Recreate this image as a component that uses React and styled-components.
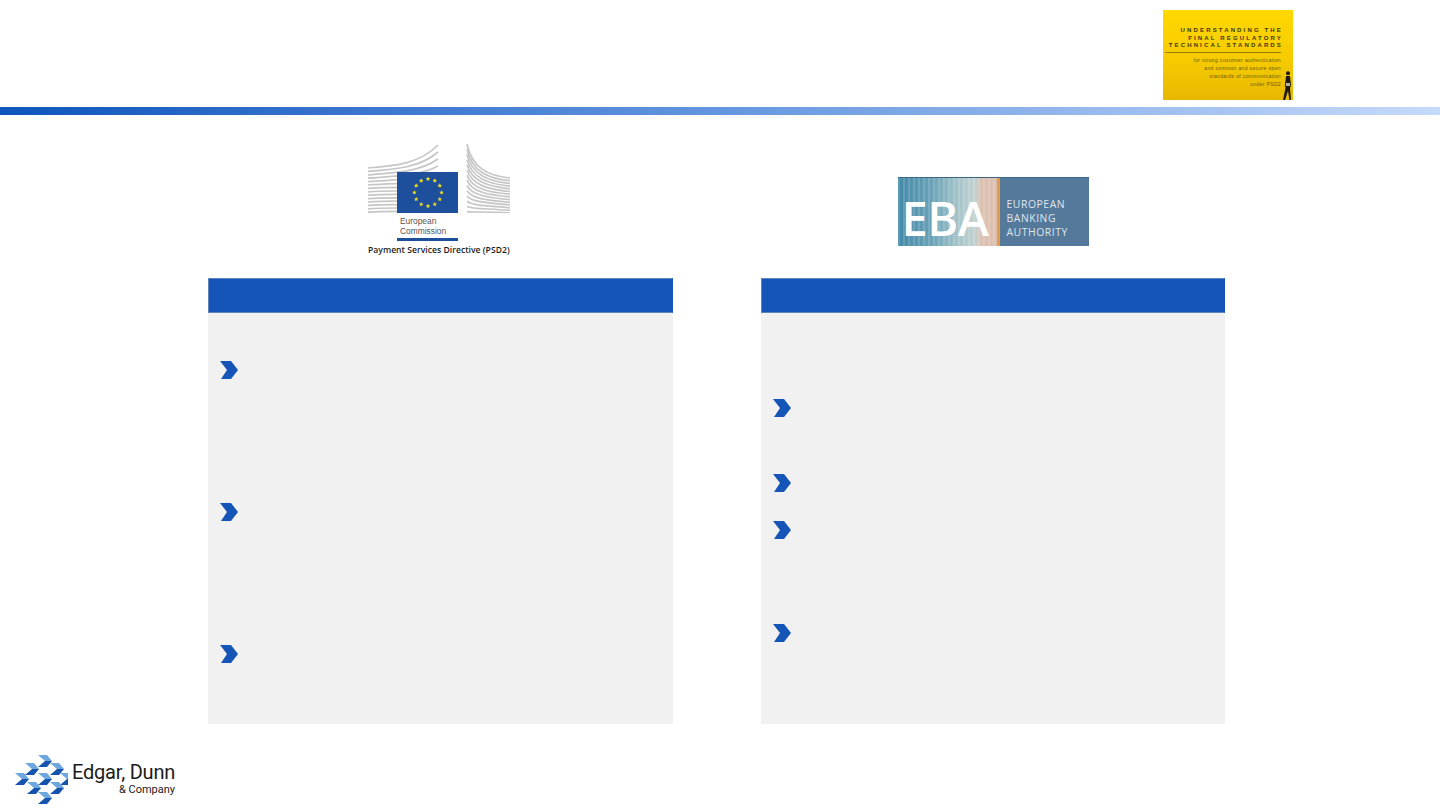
import React from 'react';
import styled, { createGlobalStyle } from 'styled-components';

const GlobalStyle = createGlobalStyle`
  html, body { margin: 0; padding: 0; background: #fff; }
  body { font-family: "Open Sans", "Liberation Sans", sans-serif; overflow: hidden; }
`;

const Page = styled.div`
  width: 1440px;
  height: 810px;
  display: flex;
  flex-direction: column;
  background: #fff;
`;

const TopBand = styled.header`
  height: 107px;
  box-sizing: border-box;
  padding: 10px 147px 0 0;
  display: flex;
  justify-content: flex-end;
  align-items: flex-start;
`;

const GradientBar = styled.div`
  height: 8px;
  background: linear-gradient(90deg, #0f55bc 0%, #5a8fdc 45%, #c6dafa 100%);
`;

const Columns = styled.main`
  display: grid;
  grid-template-columns: 465px 464px;
  column-gap: 88px;
  padding-left: 208px;
`;

const Column = styled.section`
  display: flex;
  flex-direction: column;
`;

const LogoSlot = styled.div`
  height: 163px;
  box-sizing: border-box;
  padding-top: ${p => p.$top}px;
  display: flex;
  justify-content: center;
  align-items: flex-start;
`;

const Panel = styled.div`
  height: 446px;
  display: flex;
  flex-direction: column;
  background: #f1f1f1;
`;

const PanelHead = styled.div`
  height: 35px;
  box-sizing: border-box;
  background: #1555b7;
  border: 1px solid #5f83bd;
  border-right-color: #1555b7;
`;

const BulletList = styled.ul`
  list-style: none;
  margin: 0;
  padding: ${p => p.$top}px 0 0 12px;
`;

const Bullet = styled.li`
  height: ${p => p.$height}px;
`;

const ChevronSvg = styled.svg`
  display: block;
  width: 18px;
  height: 18px;
`;

const Chevron = () => (
  <ChevronSvg viewBox="0 0 18 18">
    <polygon points="0,0 11,0 18,9 11,18 1,18 7,9" fill="#1555b7" />
  </ChevronSvg>
);

/* yellow report cover */
const Cover = styled.div`
  position: relative;
  width: 130px;
  height: 90px;
  box-sizing: border-box;
  padding: 17px 12px 0 2px;
  background: linear-gradient(180deg, #ffd800 0%, #f6cb00 55%, #e6b800 100%);
  text-align: right;
  color: #3d3510;
  font-family: "Liberation Sans", Arial, sans-serif;
`;

const CoverTitle = styled.div`
  font-size: 6px;
  line-height: 7.5px;
  font-weight: 700;
  letter-spacing: 2.15px;
  white-space: nowrap;
  margin-right: -2px;
`;

const CoverRule = styled.div`
  height: 1px;
  margin: 2px 0 3px;
  background: #8f7d10;
`;

const CoverLine = styled.div`
  font-size: 5px;
  line-height: 8.3px;
  letter-spacing: 0.35px;
  white-space: nowrap;
  color: #6b5c10;
`;

const Walker = styled.svg`
  position: absolute;
  right: 1px;
  bottom: 0;
  width: 9px;
  height: 29px;
`;

/* European Commission */
const EcLogo = styled.div`
  width: 148px;
  display: flex;
  flex-direction: column;
  margin-left: 3px;
`;

const EcSvg = styled.svg`
  display: block;
  width: 142px;
  height: 69px;
`;

const EcName = styled.div`
  margin: 3px 0 0 32px;
  font-family: "Liberation Sans", Arial, sans-serif;
  font-size: 8.4px;
  line-height: 10px;
  color: #555;
`;

const EcRule = styled.div`
  width: 61px;
  height: 3px;
  margin: 2px 0 0 29px;
  background: #1d4f9c;
`;

const EcCaption = styled.div`
  margin-top: 3px;
  font-size: 8.6px;
  line-height: 12px;
  font-weight: 600;
  letter-spacing: 0.02px;
  white-space: nowrap;
  color: #1c1c1c;
`;

const buildingLeft = Array.from({ length: 14 }, (_, i) => {
  const y = 24 + i * 3.4;
  const rise = Math.max(0, 23 - i * 3.6);
  return `M0,${y} C28,${y - 2} 52,${y - rise * 0.2} 70,${y - rise}`;
});

const buildingRight = Array.from({ length: 14 }, (_, i) => {
  const y = i * 5.2;
  const end = 34 + i * 2.7;
  return `M99,${y} C104,${y + (end - y) * 0.7} 120,${end - 2} 142,${end}`;
});

const starPoints = (cx, cy, r) =>
  Array.from({ length: 10 }, (_, i) => {
    const a = -Math.PI / 2 + (i * Math.PI) / 5;
    const d = i % 2 ? r * 0.42 : r;
    return `${(cx + d * Math.cos(a)).toFixed(2)},${(cy + d * Math.sin(a)).toFixed(2)}`;
  }).join(' ');

const euStars = Array.from({ length: 12 }, (_, i) => {
  const a = (i * Math.PI) / 6;
  return starPoints(60 + 13.6 * Math.cos(a), 48.5 + 13.6 * Math.sin(a), 2.5);
});

/* EBA */
const EbaLogo = styled.div`
  width: 191px;
  height: 69px;
  display: flex;
  margin-top: 1px;
  border-top: 1px solid #3c6685;
  box-sizing: border-box;
`;

const EbaMark = styled.div`
  width: 102px;
  box-sizing: border-box;
  padding-left: 4px;
  display: flex;
  align-items: flex-end;
  border-right: 3px solid #e79a45;
  color: #fff;
  font-size: 47px;
  line-height: 56px;
  font-weight: 600;
  letter-spacing: -0.5px;
  white-space: nowrap;
  background:
    repeating-linear-gradient(90deg, rgba(255,255,255,0.14) 0 2px, transparent 2px 5px),
    linear-gradient(90deg, #4389a8 0%, #6ba3b8 35%, #a9c6cb 62%, #c2d2d0 78%, #dcc1b2 84%, #dcbfae 100%);
`;

const EbaName = styled.div`
  flex: 1;
  box-sizing: border-box;
  padding: 19px 0 0 7px;
  background: #55799a;
  color: #dfe7ee;
  font-size: 10.4px;
  line-height: 14px;
  letter-spacing: 0.55px;
`;

/* Edgar, Dunn & Company */
const FooterBrand = styled.footer`
  margin: 31px 0 0 8px;
  display: flex;
  align-items: flex-start;
`;

const BrandMark = styled.svg`
  display: block;
  width: 60px;
  height: 50px;
`;

const BrandText = styled.div`
  width: 103px;
  margin: 6px 0 0 4px;
  text-align: right;
  color: #1b1b1b;
  font-family: Roboto, "Liberation Sans", sans-serif;
`;

const BrandName = styled.div`
  font-size: 20px;
  line-height: 23px;
  letter-spacing: -0.2px;
  white-space: nowrap;
`;

const BrandSub = styled.div`
  font-size: 11px;
  line-height: 11px;
  white-space: nowrap;
`;

const brandCells = [
  [38, 761], [25, 769], [50, 769], [15, 779], [38, 779],
  [60, 779], [27, 788], [50, 788], [38, 798],
];

const BrandChevron = ({ x, y }) => (
  <g transform={`translate(${x - 8 - 7} ${y - 755 - 6})`}>
    <polygon points="0,0 9,0 14,6 7,6" fill="#6ea7dd" />
    <polygon points="7,6 14,6 9,12 0,12" fill="#1553ad" />
  </g>
);

const leftBullets = [142, 142, 60];
const rightBullets = [75, 47, 103, 60];

export default function App() {
  return (
    <Page>
      <GlobalStyle />
      <TopBand>
        <Cover>
          <CoverTitle>UNDERSTANDING THE</CoverTitle>
          <CoverTitle>FINAL REGULATORY</CoverTitle>
          <CoverTitle>TECHNICAL STANDARDS</CoverTitle>
          <CoverRule />
          <CoverLine>for strong customer authentication</CoverLine>
          <CoverLine>and common and secure open</CoverLine>
          <CoverLine>standards of communication</CoverLine>
          <CoverLine>under PSD2</CoverLine>
          <Walker viewBox="0 0 9 29">
            <circle cx="5" cy="2.2" r="2" fill="#1d1a14" />
            <path d="M3 5h4l1 9-1 3 1 12H6.5L5 20 2 29H0l2.500-12L2 14z" fill="#1d1a14" />
            <rect x="3" y="12" width="4" height="3" fill="#b9b3a6" />
          </Walker>
        </Cover>
      </TopBand>
      <GradientBar />
      <Columns>
        <Column>
          <LogoSlot $top={29}>
            <EcLogo>
              <EcSvg viewBox="0 0 142 69">
                <g fill="none" stroke="#c6c6c6" strokeWidth="1.7">
                  {buildingLeft.map((d, i) => <path key={i} d={d} />)}
                  {buildingRight.map((d, i) => <path key={i} d={d} />)}
                </g>
                <rect x="29" y="28" width="61" height="41" fill="#1d4f9c" />
                {euStars.map((p, i) => <polygon key={i} points={p} fill="#f7df1e" />)}
              </EcSvg>
              <EcName>European<br />Commission</EcName>
              <EcRule />
              <EcCaption>Payment Services Directive (PSD2)</EcCaption>
            </EcLogo>
          </LogoSlot>
          <Panel>
            <PanelHead />
            <BulletList $top={48}>
              {leftBullets.map((h, i) => <Bullet key={i} $height={h}><Chevron /></Bullet>)}
            </BulletList>
          </Panel>
        </Column>
        <Column>
          <LogoSlot $top={61}>
            <EbaLogo>
              <EbaMark>EBA</EbaMark>
              <EbaName>EUROPEAN<br />BANKING<br />AUTHORITY</EbaName>
            </EbaLogo>
          </LogoSlot>
          <Panel>
            <PanelHead />
            <BulletList $top={86}>
              {rightBullets.map((h, i) => <Bullet key={i} $height={h}><Chevron /></Bullet>)}
            </BulletList>
          </Panel>
        </Column>
      </Columns>
      <FooterBrand>
        <BrandMark viewBox="0 0 60 50">
          {brandCells.map(([x, y], i) => <BrandChevron key={i} x={x + 7} y={y} />)}
        </BrandMark>
        <BrandText>
          <BrandName>Edgar, Dunn</BrandName>
          <BrandSub>&amp; Company</BrandSub>
        </BrandText>
      </FooterBrand>
    </Page>
  );
}
